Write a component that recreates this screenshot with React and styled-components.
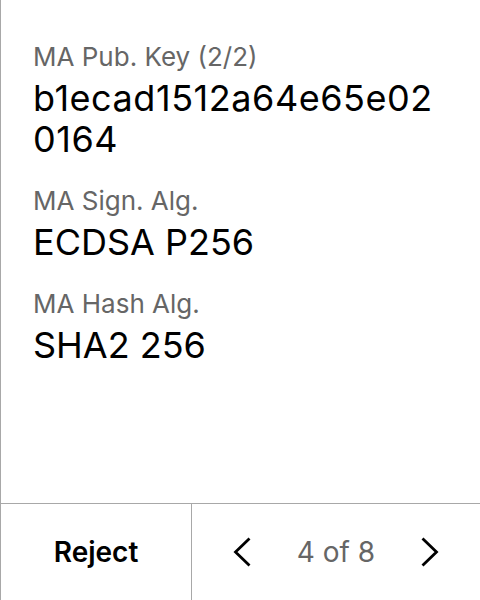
import React from "react";
import styled, { createGlobalStyle } from "styled-components";

const Global = createGlobalStyle`
  html, body { margin: 0; padding: 0; background: #fff; }
  body { font-family: Inter, "Noto Sans", sans-serif; }
`;

const Screen = styled.div`
  width: 480px;
  height: 600px;
  box-sizing: border-box;
  border-left: 1px solid #a8a8a8;
  display: flex;
  flex-direction: column;
  background: #fff;
`;

const Content = styled.div`
  flex: 1;
  padding: 41px 36px 0 32px;
  display: flex;
  flex-direction: column;
  gap: 25px;
`;

const Field = styled.div`
  display: flex;
  flex-direction: column;
  gap: 5px;
`;

const Label = styled.div`
  font-size: 26px;
  line-height: 32px;
  color: #666;
`;

const Value = styled.div`
  font-size: 36px;
  line-height: 41px;
  color: #000;
  word-break: break-all;
  letter-spacing: ${(p) => (p.$hex ? "0.55px" : "0")};
`;

const Footer = styled.div`
  height: 96px;
  border-top: 1px solid #a8a8a8;
  display: grid;
  grid-template-columns: 191px 1fr;
`;

const RejectButton = styled.button`
  border: none;
  background: none;
  border-right: 1px solid #a8a8a8;
  font-family: inherit;
  font-size: 28px;
  font-weight: 600;
  color: #000;
  padding: 0;
  cursor: pointer;
`;

const Pager = styled.div`
  display: flex;
  align-items: center;
  justify-content: center;
  gap: 46px;
`;

const PageText = styled.span`
  font-size: 28px;
  color: #666;
`;

const Arrow = styled.button`
  border: none;
  background: none;
  padding: 0;
  display: flex;
  width: 18px;
  height: 32px;
  cursor: pointer;
`;

const Chevron = ({ dir }) => (
  <svg width="18" height="32" viewBox="0 0 18 32" fill="none">
    <path
      d={dir === "left" ? "M16.5 2.5 L2.5 16 L16.5 29.5" : "M1.5 2.5 L15.5 16 L1.5 29.5"}
      stroke="#000"
      strokeWidth="2.8"
      strokeLinecap="butt"
      strokeLinejoin="miter"
    />
  </svg>
);

const fields = [
  { label: "MA Pub. Key (2/2)", value: "b1ecad1512a64e65e020164", hex: true },
  { label: "MA Sign. Alg.", value: "ECDSA P256" },
  { label: "MA Hash Alg.", value: "SHA2 256" },
];

export default function App() {
  return (
    <>
      <Global />
      <Screen>
        <Content>
          {fields.map((f) => (
            <Field key={f.label}>
              <Label>{f.label}</Label>
              <Value $hex={f.hex}>{f.value}</Value>
            </Field>
          ))}
        </Content>
        <Footer>
          <RejectButton>Reject</RejectButton>
          <Pager>
            <Arrow aria-label="Previous">
              <Chevron dir="left" />
            </Arrow>
            <PageText>4 of 8</PageText>
            <Arrow aria-label="Next">
              <Chevron dir="right" />
            </Arrow>
          </Pager>
        </Footer>
      </Screen>
    </>
  );
}
